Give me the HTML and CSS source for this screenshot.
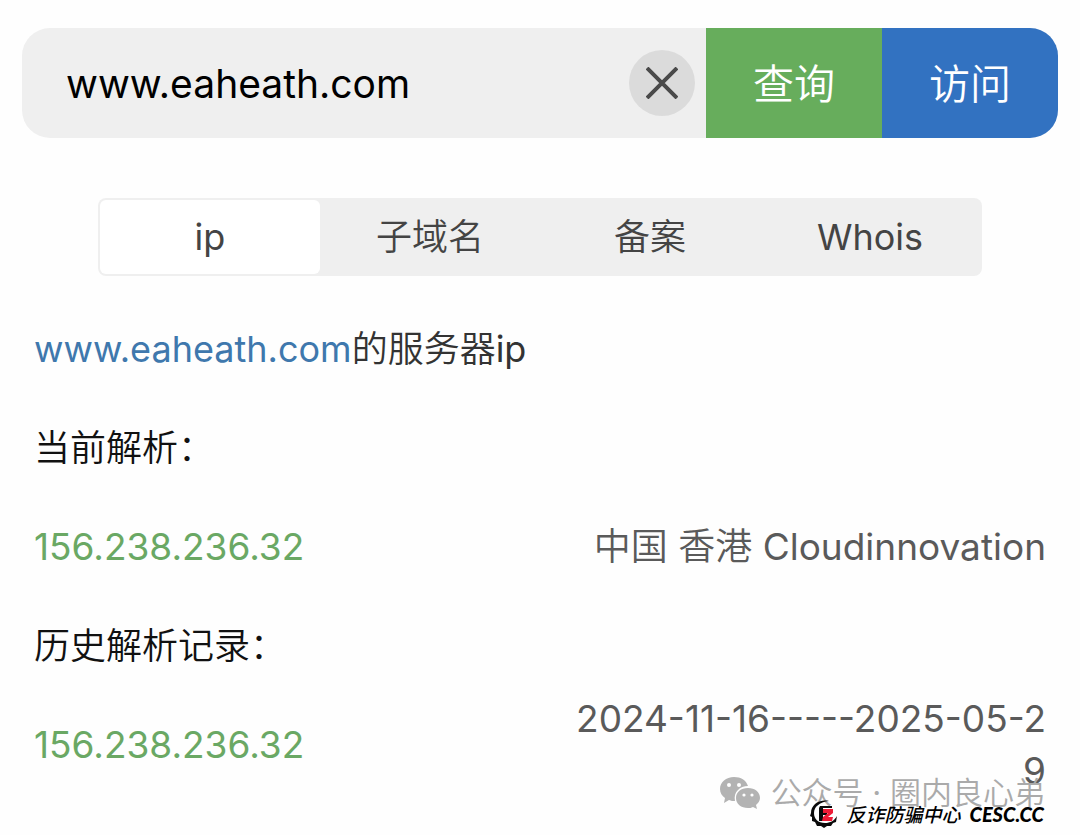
FILE: index.html
```html
<!DOCTYPE html>
<html lang="zh-CN">

<head>
    <meta charset="UTF-8">
    <meta name="viewport" content="width=device-width, initial-scale=1.0">
    <title>www.eaheath.com</title>
    <link rel="stylesheet" href="styles.css">
</head>

<body>

    <form class="search-bar">
        <input class="search-input" type="text" aria-label="域名" value="www.eaheath.com">
        <button class="clear-btn" type="reset" aria-label="清除">
            <svg width="32" height="32" viewBox="0 0 32 32" fill="none" stroke="#4a4a4a" stroke-width="4">
                <path d="M1 1L31 31M31 1L1 31"/>
            </svg>
        </button>
        <button class="search-btn query" type="submit">查询</button>
        <button class="search-btn visit" type="button">访问</button>
    </form>

    <nav class="tabs">
        <a href="#ip" class="active">ip</a>
        <a href="#subdomain">子域名</a>
        <a href="#beian">备案</a>
        <a href="#whois">Whois</a>
    </nav>

    <main class="result" id="ip">
        <p class="title"><a href="#site">www.eaheath.com</a>的服务器ip</p>

        <h2>当前解析：</h2>
        <div class="record">
            <a href="#current">156.238.236.32</a>
            <span class="info">中国 香港 Cloudinnovation</span>
        </div>

        <h2>历史解析记录：</h2>
        <div class="record">
            <a href="#history">156.238.236.32</a>
            <span class="info">2024-11-16-----2025-05-29</span>
        </div>
    </main>

    <!-- watermarks -->
    <div class="account">
        <svg width="42" height="34" viewBox="0 0 42 34">
            <path fill="#b3b3b3" d="M15 1C7 1 1 6 1 13c0 4 2 7 5 9l-1 5 5-3c2 1 4 1 6 1C14 16 21 10 29 10 27 4 22 1 15 1z"/>
            <path fill="#b3b3b3" d="M29 12c-7 0-12 4-12 10s5 10 12 10c2 0 3 0 5-1l4 2-1-4c2-2 4-4 4-7 0-6-5-10-12-10z"/>
            <g fill="#fff"><circle cx="10" cy="9" r="2"/><circle cx="20" cy="9" r="2"/><circle cx="25" cy="19" r="1.6"/><circle cx="33" cy="19" r="1.6"/></g>
        </svg>
        <span>公众号 · 圈内良心弟</span>
    </div>
    <div class="source">
        <svg width="28" height="28" viewBox="0 0 28 28">
            <path fill="#0a0a0a" d="M19 1C9-1 1 5 1 13l-1 3 2 1 0 4 3 1 2 4 4 0 3 2 3-2 4 0 2-3 3-1 1-6c-3 5-7 7-12 7C8 23 4 19 4 13 4 7 9 2 19 1z"/>
            <path fill="#0a0a0a" d="M10 6h12v2h-9v4h4v3h-4v6h-4V8z"/>
            <path fill="#ee1b36" d="M13 9h10l0 4-5 4h5l-1 4H12l1-4 5-4h-5z"/>
        </svg>
        <span>反诈防骗中心</span>
        <b>CESC.CC</b>
    </div>

</body>

</html>
```
FILE: styles.css
```css
body {
    font-family: Inter, 'Noto Sans CJK SC DemiLight', 'Noto Sans CJK SC', sans-serif;
    font-size: 36px;
    font-weight: 400;
    line-height: 52px;
    margin: 0;
    padding: 28px 22px 0;
    background-color: #fefefe;
    color: #333;
}

a {
    text-decoration: none;
}

button {
    border: none;
    padding: 0;
    cursor: pointer;
}

.search-bar {
    display: flex;
    align-items: center;
    height: 110px;
    border-radius: 28px;
    overflow: hidden;
    background-color: #efefef;
}

.search-input {
    flex: 1;
    min-width: 0;
    border: none;
    outline: none;
    padding: 0 44px;
    background: transparent;
    font-family: inherit;
    font-size: 39px;
    color: #000;
}

.clear-btn {
    display: flex;
    align-items: center;
    justify-content: center;
    width: 66px;
    height: 66px;
    margin-right: 11px;
    border-radius: 50%;
    background-color: #dbdbdb;
}

.search-btn {
    align-self: stretch;
    width: 176px;
    padding-bottom: 4px;
    font-family: inherit;
    font-size: 41px;
    color: #fff;
}

.query {
    background-color: #67ad5c;
}

.visit {
    background-color: #3272c1;
}

.tabs {
    display: grid;
    grid-template-columns: repeat(4, 1fr);
    margin: 60px 76px 0;
    padding: 2px;
    border-radius: 8px;
    background-color: #efefef;
}

.tabs a {
    padding: 11px 0;
    border-radius: 6px;
    text-align: center;
    color: #444;
}

.tabs a.active {
    background-color: #fff;
}

.result {
    padding: 0 12px;
}

.result .title {
    margin: 47px 0;
}

.title a {
    color: #3f78ad;
}

.result h2 {
    margin: 21px 0;
    font-size: 36px;
    font-weight: 400;
    color: #111;
}

.record {
    display: flex;
    align-items: center;
    justify-content: space-between;
    min-height: 104px;
    font-size: 37px;
}

.record a {
    color: #6aa864;
}

.record .info {
    width: 48%;
    text-align: right;
    word-break: break-all;
    color: #5a5a5a;
}

.account,
.source {
    position: absolute;
    display: flex;
    align-items: center;
}

.account {
    right: 35px;
    bottom: 22px;
    gap: 10px;
    font-size: 31px;
    line-height: 40px;
    color: #aaa;
}

.source {
    right: 36px;
    bottom: 7px;
    gap: 9px;
    font-family: 'Noto Sans CJK SC', sans-serif;
    font-size: 19px;
    font-style: italic;
    font-weight: 500;
    line-height: 28px;
    color: #000;
}

.source b {
    font-family: Lato, sans-serif;
    font-size: 20px;
    font-weight: 900;
}
```
